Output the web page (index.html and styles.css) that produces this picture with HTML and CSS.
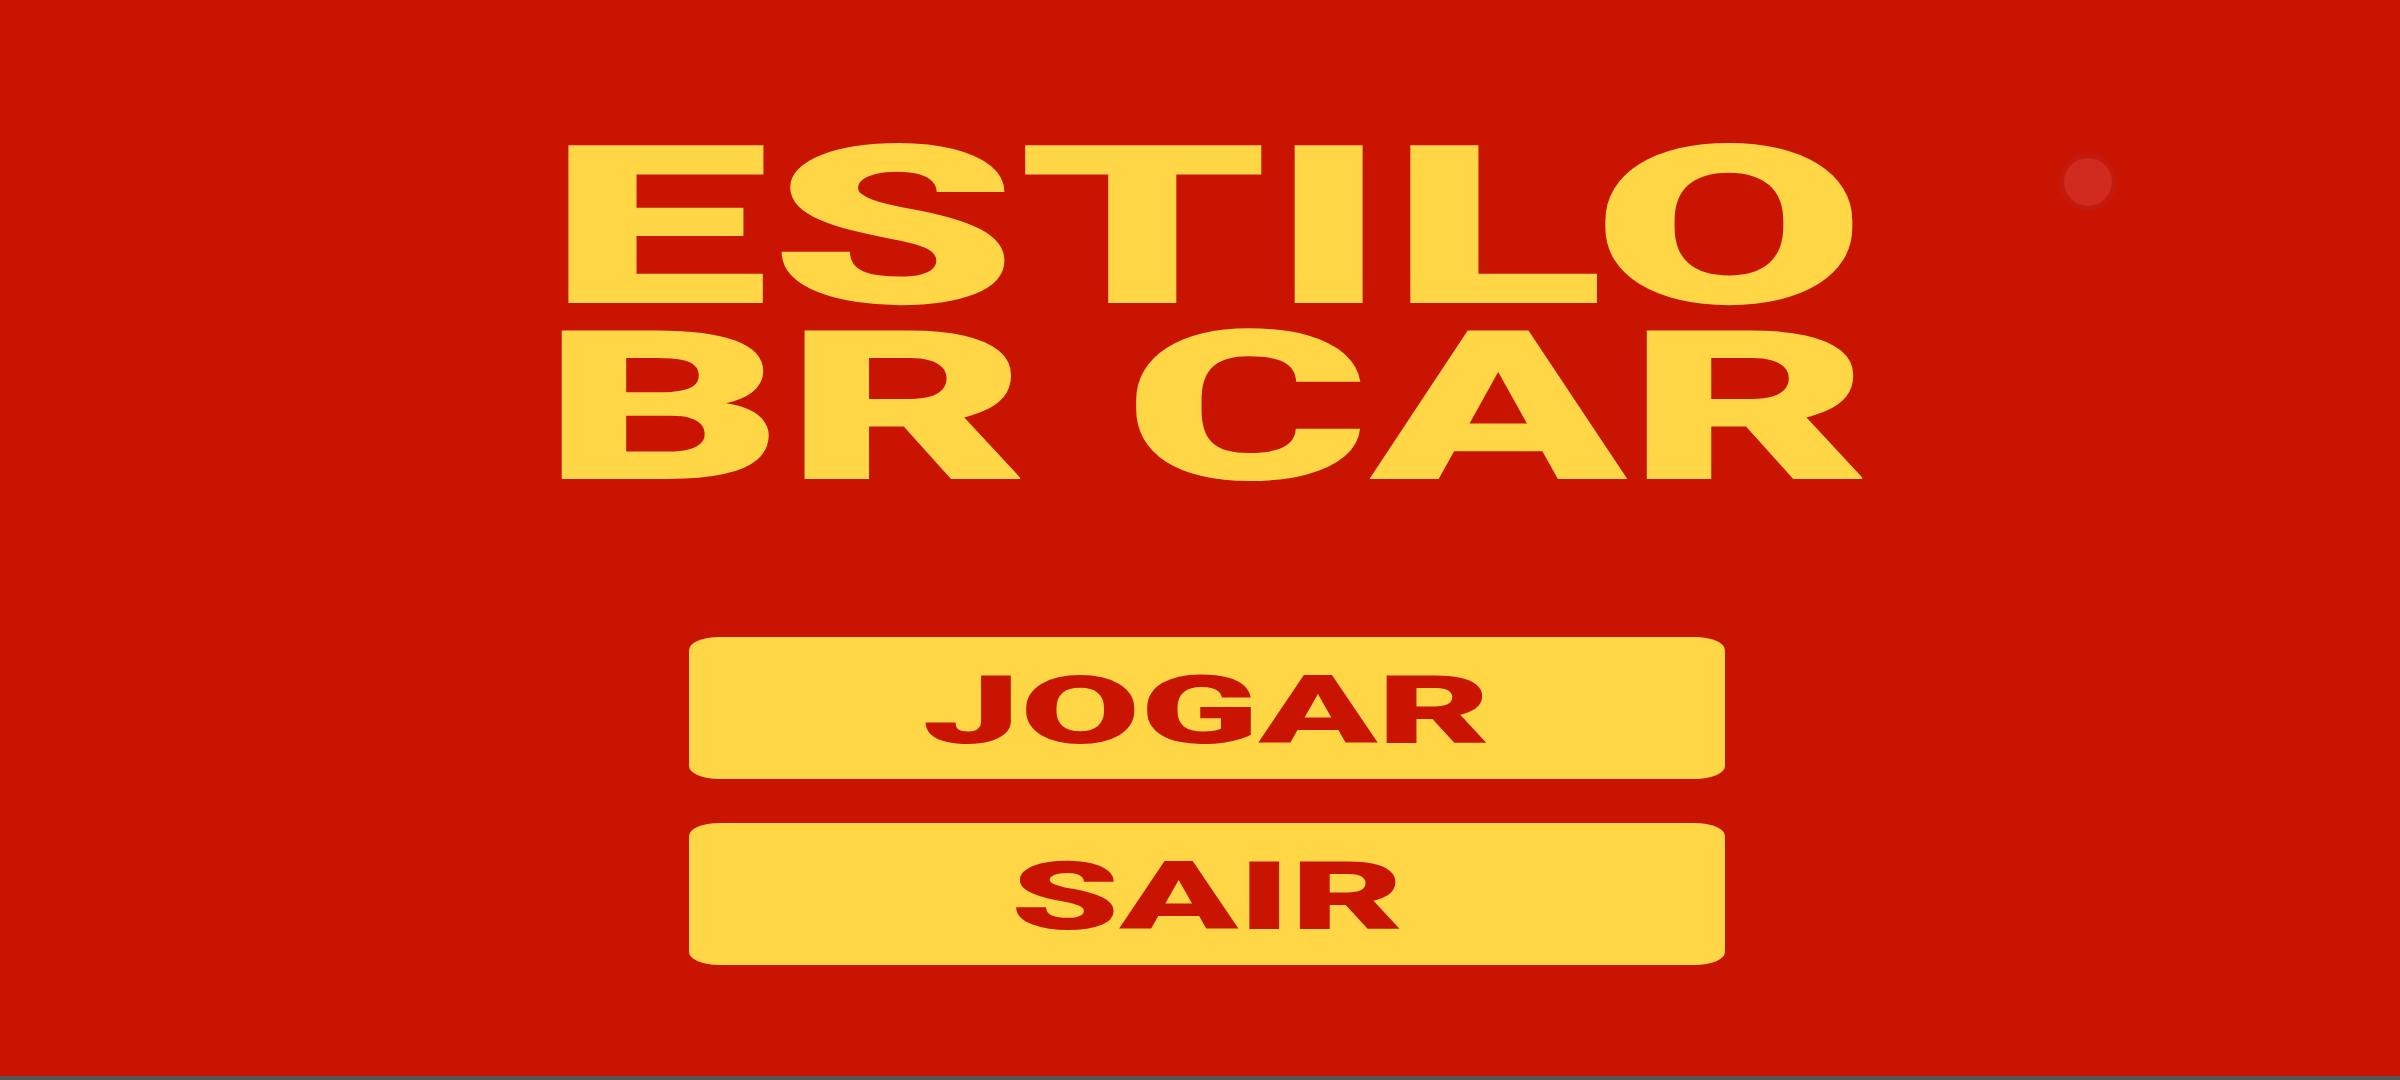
FILE: index.html
```html
<!DOCTYPE html>
<html lang="pt">
<head>
<meta charset="utf-8">
<title>Estilo BR Car</title>
<link rel="stylesheet" href="styles.css">
</head>
<body>
<main class="screen">
  <span class="dot" aria-hidden="true"></span>
  <h1 class="title">
    <span class="title-line title-line-top">ESTILO</span>
    <span class="title-line title-line-bottom">BR CAR</span>
  </h1>
  <nav class="menu">
    <button class="menu-btn" type="button"><span class="menu-label">JOGAR</span></button>
    <button class="menu-btn" type="button"><span class="menu-label">SAIR</span></button>
  </nav>
</main>
</body>
</html>
```
FILE: styles.css
```css
html, body {
  margin: 0;
  padding: 0;
}

body {
  background: #555555;
  font-family: Roboto, "Liberation Sans", sans-serif;
}

.screen {
  position: relative;
  box-sizing: border-box;
  height: 1076px;
  background: #c81400;
  display: flex;
  flex-direction: column;
  align-items: center;
  padding-top: 134px;
  padding-left: 14px;
}

.dot {
  position: absolute;
  left: 2059px;
  top: 153px;
  width: 48px;
  height: 48px;
  border-radius: 50%;
  background: #d02b1e;
  border: 5px solid #c21a0c;
}

.title {
  margin: 0;
  display: flex;
  flex-direction: column;
  align-items: center;
  color: #ffd646;
  font-weight: 900;
}

.title-line {
  display: block;
  white-space: pre;
}

.title-line-top {
  font-size: 222px;
  line-height: 186px;
  transform: scaleX(1.79);
}

.title-line-bottom {
  font-size: 209px;
  line-height: 176px;
  transform: scaleX(1.80);
}

.menu {
  margin-top: 141px;
  display: flex;
  flex-direction: column;
  gap: 44px;
}

.menu-btn {
  width: 1036px;
  height: 142px;
  border: none;
  border-radius: 30px / 13px;
  background: #ffd646;
  color: #c81400;
  display: flex;
  align-items: center;
  justify-content: center;
  padding: 6px 0 0;
  font-family: Roboto, "Liberation Sans", sans-serif;
  font-size: 94px;
  font-weight: 900;
  line-height: 94px;
}

.menu-label {
  display: block;
  transform: scaleX(1.85);
}
```
